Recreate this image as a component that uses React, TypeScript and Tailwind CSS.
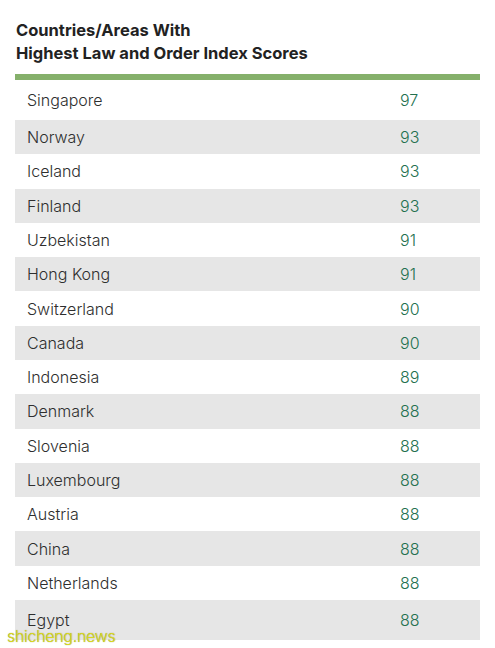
import React from "react";

const rows: [string, number][] = [
  ["Singapore", 97],
  ["Norway", 93],
  ["Iceland", 93],
  ["Finland", 93],
  ["Uzbekistan", 91],
  ["Hong Kong", 91],
  ["Switzerland", 90],
  ["Canada", 90],
  ["Indonesia", 89],
  ["Denmark", 88],
  ["Slovenia", 88],
  ["Luxembourg", 88],
  ["Austria", 88],
  ["China", 88],
  ["Netherlands", 88],
  ["Egypt", 88],
];

export default function App() {
  return (
    <div className="relative w-[495px] h-[648px] bg-white overflow-hidden" style={{ fontFamily: "Inter, 'Liberation Sans', sans-serif" }}>
      <div className="pl-[16px] pt-[19px] text-[16.5px] leading-[23px] font-bold text-[#222222]">
        <div>Countries/Areas With</div>
        <div>Highest Law and Order Index Scores</div>
      </div>
      <div className="ml-[15px] w-[465px] mt-[9px] h-[6px] bg-[#85b06b]" />
      <div className="ml-[15px] w-[465px] flex flex-col">
        {rows.map(([name, score], i) => (
          <div
            key={name}
            className={`flex items-center text-[16px] ${i === 0 || i === rows.length - 1 ? "h-[40px]" : "h-[34.29px]"} ${i % 2 === 1 ? "bg-[#e6e6e6]" : "bg-white"}`}
          >
            <div className="pl-[12px] w-[385px] font-light text-[#2e2e2e]">{name}</div>
            <div className="font-light text-[#23704f]">{score}</div>
          </div>
        ))}
      </div>
      <div
        className="absolute left-[7px] top-[626px] text-[16px] leading-[20px] font-light text-[#d9d81c] tracking-[-0.3px]"
        style={{ textShadow: "0 0 1px #8a8a40" }}
      >
        shicheng.news
      </div>
    </div>
  );
}
